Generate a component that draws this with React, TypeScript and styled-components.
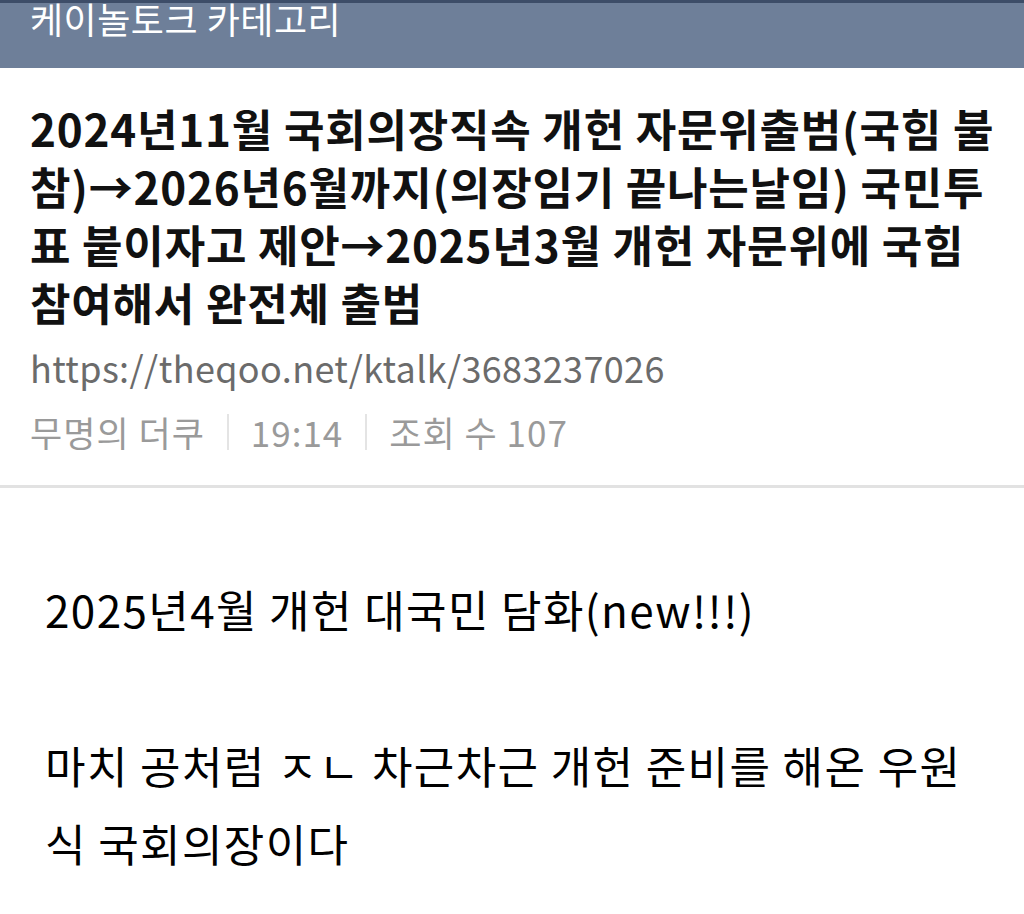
import React from 'react';
import styled, { createGlobalStyle } from 'styled-components';

const GlobalStyle = createGlobalStyle`
  html, body {
    margin: 0;
    padding: 0;
    background: #ffffff;
  }
  body {
    font-family: "Noto Sans CJK KR", "Noto Sans", sans-serif;
  }
`;

const Page = styled.div`
  width: 1024px;
  min-height: 914px;
  background: #ffffff;
  overflow: hidden;
`;

const CategoryBar = styled.header`
  height: 65px;
  background: #6e7f99;
  border-top: 3px solid #3d4d68;
  overflow: hidden;
  padding: 0 30px;
`;

const CategoryName = styled.div`
  margin-top: -10px;
  color: #ffffff;
  font-size: 36px;
  line-height: 50px;
  letter-spacing: 0.5px;
  white-space: nowrap;
`;

const PostHead = styled.section`
  padding: 31px 30px 0 30px;
  border-bottom: 3px solid #e2e2e2;
  height: 420px;
  box-sizing: border-box;
`;

const Title = styled.h1`
  margin: 0;
  font-size: 44px;
  font-weight: 700;
  line-height: 58px;
  color: #111111;
  letter-spacing: 0.8px;
  white-space: nowrap;
`;

const TitleLine = styled.span`
  display: block;
`;

const Link = styled.div`
  margin-top: 11px;
  font-size: 36px;
  line-height: 50px;
  letter-spacing: 0.35px;
  color: #6b6b6b;
`;

const Meta = styled.div`
  margin-top: 15px;
  display: flex;
  align-items: center;
  font-size: 35px;
  line-height: 50px;
  letter-spacing: 1px;
  color: #9a9a9a;
`;

const Sep = styled.span`
  display: inline-block;
  width: 2px;
  height: 36px;
  background: #e4e4e4;
  margin: 0 22px;
`;

const Body = styled.article`
  padding: 82px 45px 0 45px;
  font-size: 44px;
  line-height: 78px;
  letter-spacing: 1.4px;
  color: #000000;
  word-break: break-all;
`;

const Para = styled.p`
  margin: 0;
  min-height: 78px;
`;

const titleLines = [
  '2024년11월 국회의장직속 개헌 자문위출범(국힘 불',
  '참)→2026년6월까지(의장임기 끝나는날임) 국민투',
  '표 붙이자고 제안→2025년3월 개헌 자문위에 국힘',
  '참여해서 완전체 출범',
];

export default function App() {
  return (
    <Page>
      <GlobalStyle />
      <CategoryBar>
        <CategoryName>케이놀토크 카테고리</CategoryName>
      </CategoryBar>
      <PostHead>
        <Title>
          {titleLines.map((line) => (
            <TitleLine key={line}>{line}</TitleLine>
          ))}
        </Title>
        <Link>https://theqoo.net/ktalk/3683237026</Link>
        <Meta>
          <span>무명의 더쿠</span>
          <Sep />
          <span>19:14</span>
          <Sep />
          <span>조회 수 107</span>
        </Meta>
      </PostHead>
      <Body>
        <Para>2025년4월 개헌 대국민 담화(new!!!)</Para>
        <Para />
        <Para>마치 공처럼 ㅈㄴ 차근차근 개헌 준비를 해온 우원식 국회의장이다</Para>
      </Body>
    </Page>
  );
}
